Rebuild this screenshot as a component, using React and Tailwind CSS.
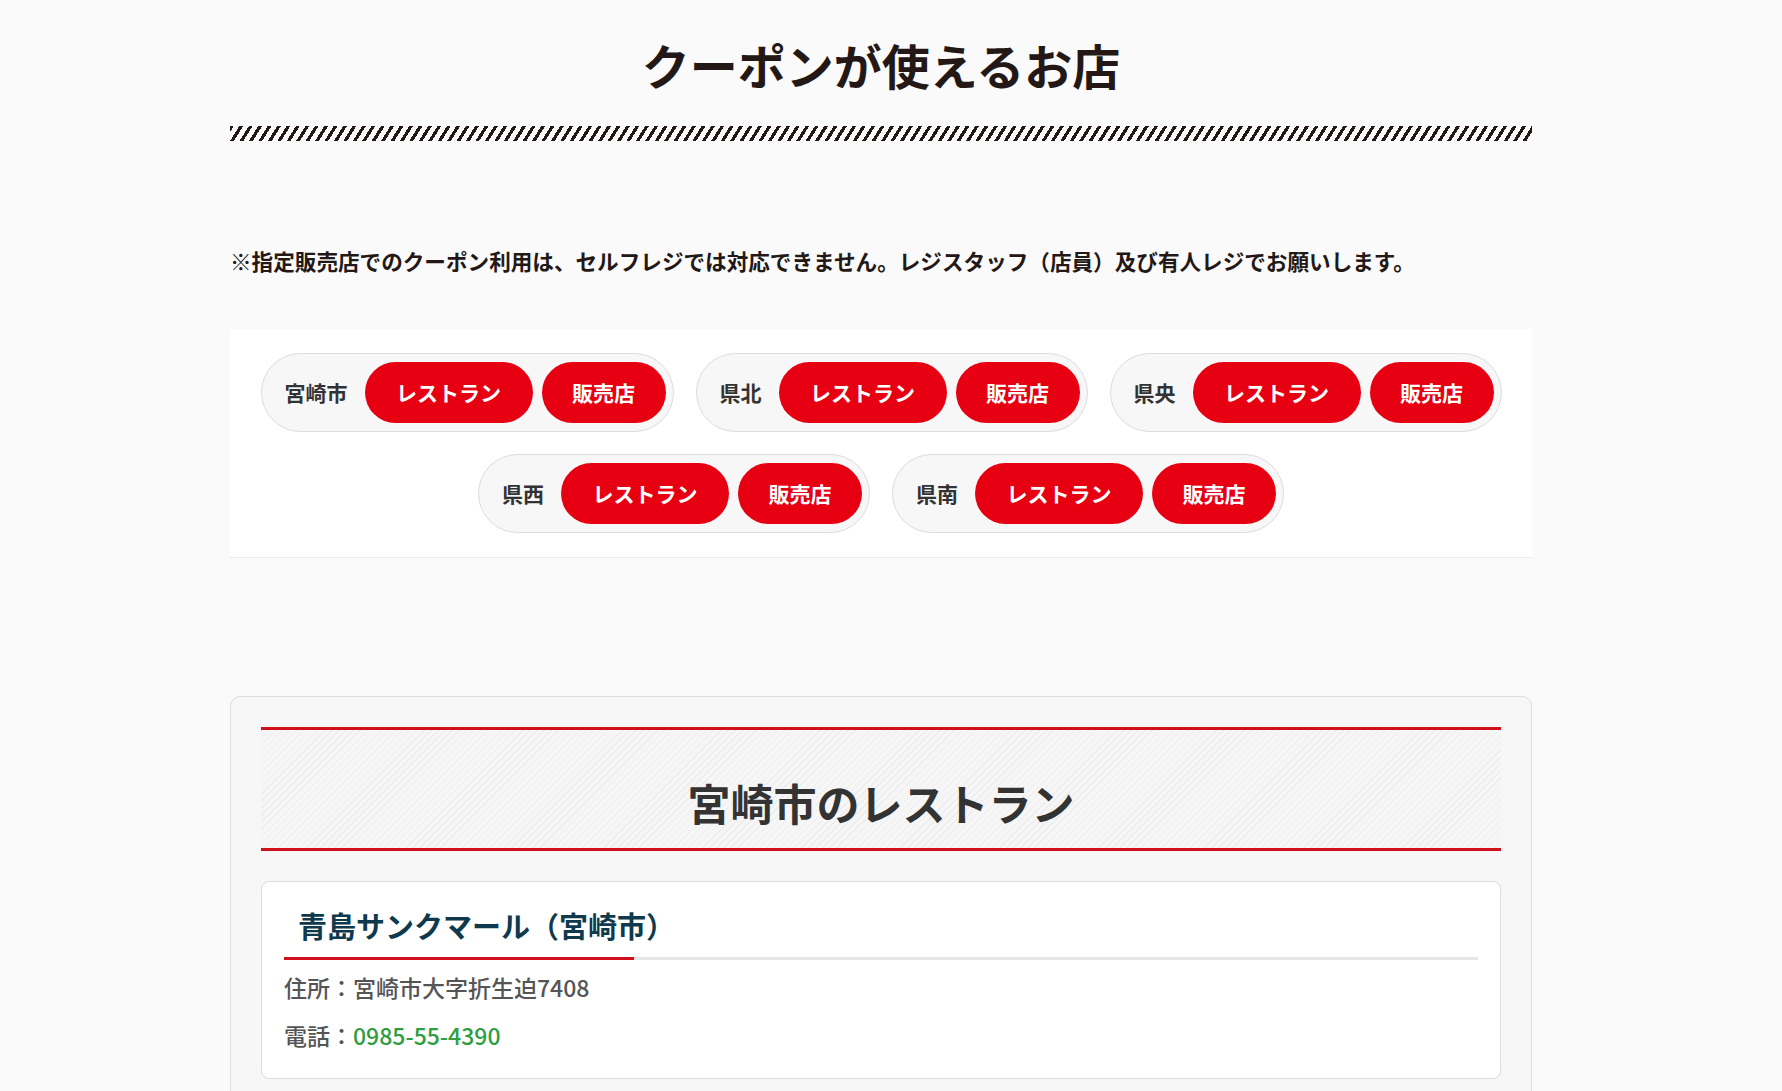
import React from "react";

const areas = ["宮崎市", "県北", "県央", "県西", "県南"];

function Pill({ name }) {
  return (
    <div className="flex items-center rounded-full border border-[#dcdcdc] bg-[#f7f7f7] py-2 pl-[23px] pr-[7px]">
      <span className="mr-[17px] text-[21px] font-bold leading-none text-[#333333]">{name}</span>
      <a className="flex h-[61px] w-[168px] items-center justify-center rounded-full bg-[#e60012] text-[21px] font-bold leading-none text-white">
        レストラン
      </a>
      <a className="ml-[9px] flex h-[61px] w-[124px] items-center justify-center rounded-full bg-[#e60012] text-[21px] font-bold leading-none text-white">
        販売店
      </a>
    </div>
  );
}

export default function App() {
  return (
    <div
      className="min-h-[1091px] overflow-hidden bg-[#fafafa] text-[#231815]"
      style={{ fontFamily: '"Noto Sans CJK JP", "Noto Sans", sans-serif' }}
    >
      <div className="ml-[230px] w-[1302px]">
        <h1 className="pt-[28px] text-center text-[48px] font-bold leading-[72px] text-[#231815]">
          クーポンが使えるお店
        </h1>
        <div className="mt-[26px] h-[15px] bg-[repeating-linear-gradient(122deg,#231815_0px,#231815_3.2px,transparent_3.2px,transparent_8px)]" />

        <p className="mt-[104px] text-[21.6px] font-bold leading-[32px] text-[#231815]">
          ※指定販売店でのクーポン利用は、セルフレジでは対応できません。レジスタッフ（店員）及び有人レジでお願いします。
        </p>

        <div className="mt-[52px] flex flex-wrap justify-center gap-x-[22px] gap-y-[22px] border-b border-[#ececec] bg-white px-[20px] py-[24px]">
          {areas.map((a) => (
            <Pill key={a} name={a} />
          ))}
        </div>

        <div className="mt-[138px] rounded-[10px] border border-[#dedede] bg-[#f7f7f7] px-[30px] pb-[60px] pt-[30px]">
          <h2 className="border-y-[3px] border-[#d0111b] bg-[repeating-linear-gradient(135deg,#ededed_0px,#ededed_1px,#f6f6f6_1px,#f6f6f6_5px)] pb-[14px] pt-[40px] text-center text-[43px] font-bold leading-[64px] text-[#333333]">
            宮崎市のレストラン
          </h2>

          <div className="mt-[30px] rounded-lg border border-[#dddddd] bg-white pb-[27px] pl-[22px] pr-[22px] pt-[22px]">
            <h3 className="pl-[14px] text-[29px] font-bold leading-[43px] text-[#0f3a4e]">
              青島サンクマール（宮崎市）
            </h3>
            <div className="mt-[10px] h-[3px] bg-[#e6e6e6]">
              <div className="h-full w-[350px] bg-[#d0111b]" />
            </div>
            <div className="mt-[11px] flex flex-col gap-[16px] text-[23px] font-medium leading-[32px] text-[#555555]">
              <p>住所：宮崎市大字折生迫7408</p>
              <p>
                電話：<span className="text-[#2e9e3f]">0985-55-4390</span>
              </p>
            </div>
          </div>
        </div>
      </div>
    </div>
  );
}
